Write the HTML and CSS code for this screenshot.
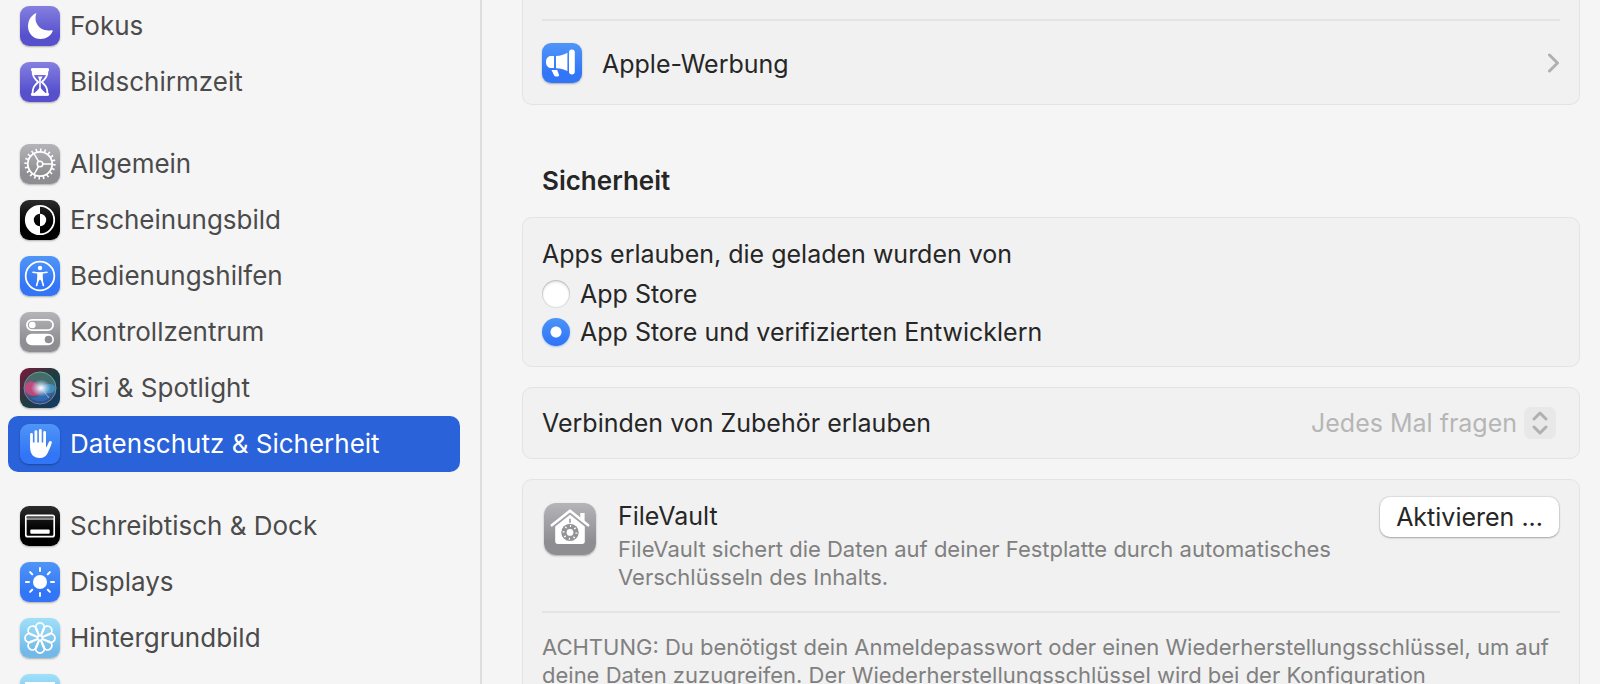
FILE: index.html
```html
<!DOCTYPE html>
<html lang="de">
<head>
<meta charset="utf-8">
<title>Datenschutz &amp; Sicherheit</title>
<link rel="stylesheet" href="styles.css">
</head>
<body>
<div class="window">
  <nav class="sidebar">
    <div class="nav-group">
      <a class="nav-item" href="#"><span class="tile tile-indigo"><svg viewBox="0 0 40 40"><path fill="#fff" d="M16.300 7.600C13 16.800 20 26.500 31.600 24.200c1-.2 1.300.5.9 1.400C30.400 30.300 26 33 20.700 33 13.500 33 8 27.500 8 20.400 8 14.600 11 9.900 15.200 7.600c.8-.5 1.400-.4 1.100 0z"/></svg></span>Fokus</a>
      <a class="nav-item" href="#"><span class="tile tile-indigo"><svg viewBox="0 0 40 40"><path fill="none" stroke="#fff" stroke-width="1.800" stroke-linejoin="round" d="M12.500 7.500h15c0 7-1.500 8.500-5.700 12.500 4.200 4 5.700 5.500 5.700 12.500h-15c0-7 1.500-8.500 5.700-12.500-4.200-4-5.700-5.500-5.700-12.500z"/><path fill="#fff" d="M12 6.500h16.500l-.8 6.500h-15.400zM18 14.500h4.500l-1.700 3.500v8c1.200 2 3.200 3.200 5.200 5.500h-12c2-2.300 4-3.500 5.200-5.500v-8z"/><path fill="#fff" d="M12 31h16c1.400 0 1.400 2.800 0 2.800H12c-1.400 0-1.400-2.800 0-2.800zM12 6.200h16c1.400 0 1.400 2.800 0 2.800H12c-1.400 0-1.400-2.800 0-2.800z"/></svg></span>Bildschirmzeit</a>
    </div>
    <div class="nav-group">
      <a class="nav-item" href="#"><span class="tile tile-gray"><svg viewBox="0 0 40 40"><g fill="none" stroke="#fff"><circle cx="20" cy="20" r="14" stroke-width="3.200" pathLength="40" stroke-dasharray=".7 1.300"/><circle cx="20" cy="20" r="12.200" stroke-width="1.800"/><circle cx="20" cy="20" r="2.800" stroke-width="1.500"/><path stroke-width="1.500" d="M22.800 20H32M18.600 17.600 14 9.500M18.600 22.400 14 30.500"/></g></svg></span>Allgemein</a>
      <a class="nav-item" href="#"><span class="tile tile-black"><svg viewBox="0 0 40 40"><circle cx="20" cy="20" r="14.200" fill="none" stroke="#fff" stroke-width="1.800"/><path fill="#fff" d="M20 6a14 14 0 0 0 0 28v-7.800a6.200 6.200 0 0 1 0-12.400zM20 13.800a6.200 6.200 0 0 1 0 12.400z"/></svg></span>Erscheinungsbild</a>
      <a class="nav-item" href="#"><span class="tile tile-blue"><svg viewBox="0 0 40 40"><circle cx="20" cy="20" r="14.300" fill="none" stroke="#fff" stroke-width="1.800"/><circle cx="20" cy="12" r="2.200" fill="#fff"/><path fill="none" stroke="#fff" stroke-width="1.600" stroke-linecap="round" d="M13 16.200c4.500 1 9.500 1 14 0M18.300 23.500 16.600 29.500M21.700 23.500l1.700 6"/><path fill="#fff" d="M17.200 16.500h5.600v5l.3 3.300-1.500.5L20 23.500l-1.600 1.800-1.500-.5.3-3.300z"/></svg></span>Bedienungshilfen</a>
      <a class="nav-item" href="#"><span class="tile tile-gray"><svg viewBox="0 0 40 40"><rect x="6.900" y="7.900" width="26.200" height="10.200" rx="5.100" fill="none" stroke="#fff" stroke-width="1.800"/><circle cx="12.300" cy="13" r="3.300" fill="#fff"/><rect x="6" y="21.800" width="28" height="11.400" rx="5.700" fill="#fff"/><circle cx="28.500" cy="27.500" r="3.800" fill="#8f8f94"/></svg></span>Kontrollzentrum</a>
      <a class="nav-item" href="#"><span class="tile tile-siri"><svg viewBox="0 0 40 40"><defs><radialGradient id="glow"><stop offset="0" stop-color="#fff"/><stop offset=".25" stop-color="#e8f4ff" stop-opacity=".85"/><stop offset="1" stop-color="#bfe6ff" stop-opacity="0"/></radialGradient><linearGradient id="ring" x1="0" y1="1" x2=".6" y2="0"><stop offset="0" stop-color="#8d6ac0"/><stop offset="1" stop-color="#5bab93"/></linearGradient><linearGradient id="orb" x1="0" y1="0" x2="0" y2="1"><stop offset="0" stop-color="#3f8f78"/><stop offset=".5" stop-color="#6a7f9a"/><stop offset="1" stop-color="#2a4f9a"/></linearGradient></defs><circle cx="20" cy="20" r="16" fill="url(#orb)" fill-opacity=".65" stroke="url(#ring)" stroke-width="1"/><path fill="#e0417d" fill-opacity=".75" d="M5 20c0-7 8-10 15-1 4 6-2 9-6 9-5 0-9-3-9-8z"/><path fill="#41a0d8" fill-opacity=".7" d="M19 21c6-7 16-6 16-1s-8 9-16 1z"/><path fill="#2d7fdb" fill-opacity=".5" d="M10 29c7 2 12-4 12-7 4 3 8 6 9 5-4 8-15 9-21 2z"/><ellipse cx="21" cy="20" rx="10" ry="8.500" fill="url(#glow)"/><path stroke="#f4c6dc" stroke-opacity=".6" stroke-width="1" d="M22 21l7 9"/></svg></span>Siri &amp; Spotlight</a>
      <a class="nav-item nav-item-active" href="#" aria-current="page"><span class="tile tile-blue"><svg viewBox="0 0 40 40"><path fill="none" stroke="#fff" stroke-width="2.800" stroke-linecap="round" d="M11.500 10.500V23M15.900 7.600V20M20.300 6.500V20M24.600 8.500V22"/><path fill="#fff" d="M10.100 18.500h15.900v5.200c1.200-1.400 2-3.800 2.900-5.800.8-1.700 3.500-1.100 2.900.9-1.100 3.900-2.600 7.200-4.100 10.100-1.600 3.400-4.300 5.200-8 5.200-6.300 0-9.600-4-9.600-11z"/></svg></span>Datenschutz &amp; Sicherheit</a>
    </div>
    <div class="nav-group">
      <a class="nav-item" href="#"><span class="tile tile-black"><svg viewBox="0 0 40 40"><rect x="5.800" y="9.300" width="28.400" height="21.400" rx="2" fill="none" stroke="#fff" stroke-width="1.700"/><path stroke="#fff" stroke-width="1.200" d="M6 13h28"/><path stroke="#999" stroke-width="1" d="M6 11h28"/><rect x="10.300" y="23.500" width="19.400" height="4.200" rx="1" fill="#fff"/></svg></span>Schreibtisch &amp; Dock</a>
      <a class="nav-item" href="#"><span class="tile tile-blue"><svg viewBox="0 0 40 40"><circle cx="20" cy="20" r="7" fill="#fff"/><path stroke="#fff" stroke-width="2" stroke-linecap="round" d="M20 6v3M20 31v3M6 20h3M31 20h3M10.100 10.100l2.100 2.100M27.800 27.800l2.100 2.100M10.100 29.900l2.100-2.100M27.800 12.200l2.100-2.100"/></svg></span>Displays</a>
      <a class="nav-item" href="#"><span class="tile tile-sky"><svg viewBox="0 0 40 40"><defs><path id="petal" d="M19 18 16 11.500A4.500 4.500 0 1 1 24 11.500L21 18"/></defs><g fill="none" stroke="#fff" stroke-width="1.700"><use href="#petal"/><use href="#petal" transform="rotate(45 20 20)"/><use href="#petal" transform="rotate(90 20 20)"/><use href="#petal" transform="rotate(135 20 20)"/><use href="#petal" transform="rotate(180 20 20)"/><use href="#petal" transform="rotate(225 20 20)"/><use href="#petal" transform="rotate(270 20 20)"/><use href="#petal" transform="rotate(315 20 20)"/><circle cx="20" cy="20" r="2.400"/></g></svg></span>Hintergrundbild</a>
      <a class="nav-item" href="#"><span class="tile tile-sky"><svg viewBox="0 0 40 40"><rect x="6" y="9" width="28" height="20" fill="#b9dcef" stroke="#fff" stroke-width="2"/></svg></span></a>
    </div>
  </nav>

  <main class="content">
    <section class="card card-ads">
      <button class="link-row" type="button">
        <span class="tile tile-blue"><svg viewBox="0 0 40 40"><g fill="#fff"><path d="M12 13v12H9c-3 0-5-2.500-5-6s2-6 5-6zM14 13c4.500-.3 8-1.400 11.400-3.300v18.400C22 26.300 18.500 25.400 14 25.200z"/><rect x="27" y="6.500" width="5.800" height="25" rx="2.900"/><path d="M9.500 27h5.700l1.700 4.500c.5 1.600-.5 2-1.700 2h-1.400c-1 0-1.500-.5-1.900-1.400z"/></g></svg></span>
        <span class="link-label">Apple-Werbung</span>
        <svg class="chevron" viewBox="0 0 12 20"><path d="M1.500 2l8 8-8 8"/></svg>
      </button>
    </section>

    <h2 class="section-title">Sicherheit</h2>

    <fieldset class="card sources">
      <legend class="sources-title">Apps erlauben, die geladen wurden von</legend>
      <label class="choice"><input class="radio" type="radio" name="source">App Store</label>
      <label class="choice"><input class="radio" type="radio" name="source" checked>App Store und verifizierten Entwicklern</label>
    </fieldset>

    <section class="card accessory">
      <label for="accessory">Verbinden von Zubehör erlauben</label>
      <div class="popup">
        <select class="popup-select" id="accessory" disabled><option>Jedes Mal fragen</option></select>
        <span class="stepper"><svg viewBox="0 0 32 32"><path d="M10 12l6-6 6 6M10 20l6 6 6-6"/></svg></span>
      </div>
    </section>

    <section class="card vault">
      <div class="vault-row">
        <span class="tile tile-gray tile-large"><svg viewBox="0 0 52 52"><path fill="#fff" d="M36.300 10h4.300v10.500l-4.300-3.700z"/><path fill="none" stroke="#fff" stroke-width="2.600" stroke-linecap="round" stroke-linejoin="round" d="M7.800 22.300 26 7.700l18.200 14.600"/><path fill="#fff" d="M11.200 23.500 26 11.800l14.800 11.700v14.800c0 1.700-1 2.700-2.700 2.700H13.900c-1.700 0-2.700-1-2.700-2.700z"/><path stroke="#9a9a9f" stroke-width="1.600" d="M26 15.800v4"/><circle cx="26" cy="29.400" r="8.700" fill="#929297"/><circle cx="26" cy="29.400" r="6.400" fill="none" stroke="#fff" stroke-width="2" pathLength="32" stroke-dasharray="1 3"/><circle cx="26" cy="29.400" r="3.400" fill="#fff"/></svg></span>
        <div class="vault-text">
          <h3 class="vault-title">FileVault</h3>
          <p class="note">FileVault sichert die Daten auf deiner Festplatte durch automatisches Verschlüsseln des Inhalts.</p>
        </div>
        <button class="push-button" type="button">Aktivieren ...</button>
      </div>
      <p class="note vault-warning">ACHTUNG: Du benötigst dein Anmeldepasswort oder einen Wiederherstellungsschlüssel, um auf deine Daten zuzugreifen. Der Wiederherstellungsschlüssel wird bei der Konfiguration</p>
    </section>
  </main>
</div>
</body>
</html>
```
FILE: styles.css
```css
* {
  box-sizing: border-box;
}

body {
  margin: 0;
  background: #f5f5f5;
  color: #262626;
  font: 25px/32px Inter, "Liberation Sans", sans-serif;
}

h2, h3, p {
  margin: 0;
}

button, select, input {
  font: inherit;
  color: inherit;
}

.window {
  display: flex;
  height: 100vh;
  overflow: hidden;
}

/* Sidebar */

.sidebar {
  flex: 0 0 482px;
  display: flex;
  flex-direction: column;
  gap: 26px;
  padding: 0 20px 0 8px;
  margin-top: -2px;
  border-right: 2px solid #dedede;
}

.nav-item {
  display: flex;
  align-items: center;
  gap: 10px;
  height: 56px;
  padding: 0 12px;
  border-radius: 10px;
  color: #4b4b4b;
  font-size: 26px;
  text-decoration: none;
  white-space: nowrap;
}

.nav-item-active {
  background: #2962d9;
  color: #fff;
}

.tile {
  flex: none;
  width: 40px;
  height: 40px;
  border-radius: 9px;
  overflow: hidden;
  box-shadow: 0 1px 2px rgba(0, 0, 0, 0.3);
}

.tile svg {
  display: block;
}

.tile-large {
  width: 52px;
  height: 52px;
  border-radius: 12px;
}

.tile-indigo { background: linear-gradient(#8580e0, #5650cd 75%); }
.tile-gray { background: linear-gradient(#b4b4b9, #8d8d92 75%); }
.tile-black { background: linear-gradient(#2c2c2c, #000 60%); }
.tile-blue { background: linear-gradient(#5095f7, #3276f7 75%); }
.tile-sky { background: linear-gradient(#9fe0fa, #72b9e8 85%); }
.tile-siri { background: linear-gradient(to bottom right, #7d1838, #1f3d40 50%, #123a68); }

/* Content */

.content {
  flex: 1;
  min-width: 0;
  padding: 0 20px 0 40px;
}

.card {
  margin: 0 0 20px;
  padding: 0 19px;
  border: 1px solid #e3e3e3;
  border-radius: 10px;
  background: #f1f1f1;
}

.card-ads {
  padding-top: 19px;
  border-top: 0;
  border-radius: 0 0 10px 10px;
}

.link-row {
  display: flex;
  align-items: center;
  gap: 20px;
  width: 100%;
  height: 85px;
  padding: 0;
  border: 0;
  border-top: 2px solid #e4e4e4;
  background: none;
  text-align: left;
}

.link-label {
  flex: 1;
  padding-top: 2px;
}

.chevron {
  width: 12px;
  height: 20px;
}

.chevron path,
.stepper path {
  fill: none;
  stroke: #b0b0b0;
  stroke-width: 3;
  stroke-linecap: round;
  stroke-linejoin: round;
}

.section-title {
  margin: 60px 0 20px;
  padding: 0 20px;
  font-size: 26px;
  font-weight: 600;
}

.sources {
  display: flex;
  flex-direction: column;
  gap: 6px;
  min-width: 0;
  padding-top: 20px;
  padding-bottom: 18px;
}

.sources-title {
  float: left;
  margin-bottom: 2px;
  padding: 0;
}

.choice {
  display: flex;
  align-items: center;
  gap: 10px;
}

.radio {
  appearance: none;
  width: 28px;
  height: 28px;
  margin: 0;
  border-radius: 50%;
  background: #fff;
  box-shadow: inset 0 0 1px 1px rgba(0, 0, 0, 0.14), inset 0 2px 3px rgba(0, 0, 0, 0.14);
}

.radio:checked {
  background: radial-gradient(circle, #fff 5px, transparent 6px), linear-gradient(#4c93f8, #2e73f6);
  box-shadow: 0 1px 2px rgba(46, 115, 246, 0.4);
}

.accessory {
  display: flex;
  align-items: center;
  justify-content: space-between;
  height: 72px;
  padding-right: 23px;
}

.popup {
  display: flex;
  align-items: center;
  gap: 6px;
}

.popup-select {
  appearance: none;
  padding: 0;
  border: 0;
  background: none;
  color: #b6b6b6;
  opacity: 1;
}

.stepper {
  width: 32px;
  height: 32px;
  border-radius: 7px;
  background: #e8e8e8;
}

.stepper svg {
  display: block;
}

.vault-row {
  display: flex;
  align-items: flex-start;
  padding: 17px 0 16px;
  border-bottom: 2px solid #e4e4e4;
}

.vault-row .tile {
  margin: 6px 22px 0 2px;
}

.vault-text {
  flex: 1;
  padding: 3px 0 4px;
}

.vault-title {
  margin-bottom: 3px;
  font-size: 25px;
  font-weight: 400;
}

.note {
  color: #808080;
  font-size: 22px;
  line-height: 28px;
}

.vault-warning {
  padding: 20px 0;
}

.push-button {
  height: 40px;
  margin: 0 1px 0 24px;
  padding: 0 16px;
  border: 0;
  border-radius: 10px;
  background: #fff;
  box-shadow: 0 0 1px 1px rgba(0, 0, 0, 0.08), 0 1px 2px rgba(0, 0, 0, 0.25);
}
```
